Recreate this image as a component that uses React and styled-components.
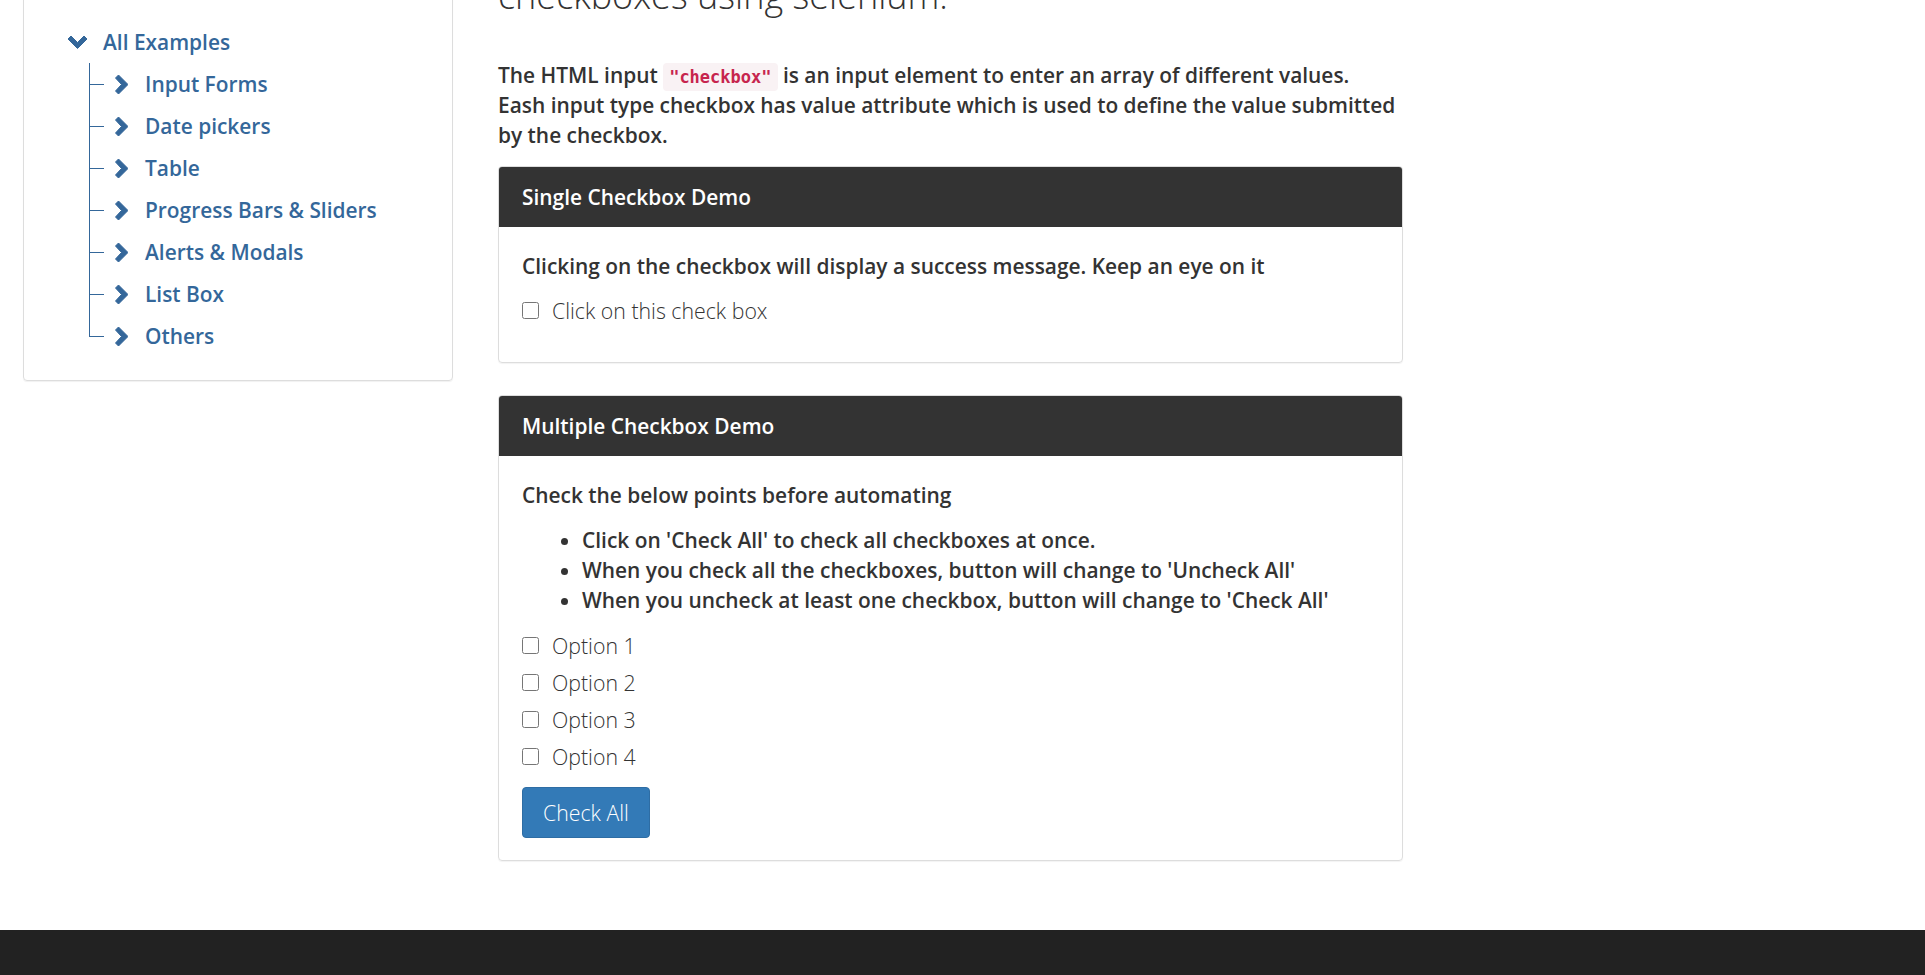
import React, { useState } from "react";
import styled, { createGlobalStyle } from "styled-components";

const GlobalStyle = createGlobalStyle`
  html {
    overflow-y: scroll;
  }
  body {
    margin: 0;
    background: #fff;
    color: #333;
    font-family: "Open Sans", "Liberation Sans", sans-serif;
  }
  * {
    box-sizing: border-box;
  }
`;

const BLUE = "#34679a";

const Page = styled.div`
  height: 975px;
  display: flex;
  flex-direction: column;
  overflow: hidden;
`;

const Main = styled.div`
  flex: 1;
  display: flex;
  align-items: flex-start;
  padding-left: 23px;
`;

const Sidebar = styled.aside`
  width: 430px;
  margin-top: -20px;
  padding: 40px 0 23px 44px;
  border: 1px solid #ddd;
  border-radius: 4px;
  box-shadow: 0 1px 1px rgba(0, 0, 0, 0.06);
  color: ${BLUE};
  font-weight: 600;
  font-size: 20.9px;
`;

const RootRow = styled.div`
  height: 42px;
  display: flex;
  align-items: center;
  gap: 16px;
`;

const Tree = styled.ul`
  list-style: none;
  margin: 0 0 0 21px;
  padding: 0;
`;

const TreeItem = styled.li`
  position: relative;
  height: 42px;
  display: flex;
  align-items: center;
  gap: 17px;
  padding-left: 26px;

  &::before {
    content: "";
    position: absolute;
    left: 0;
    top: 0;
    width: 1px;
    height: ${(p) => (p.$last ? "50%" : "100%")};
    background: ${BLUE};
  }
  &::after {
    content: "";
    position: absolute;
    left: 0;
    top: 50%;
    width: 15px;
    height: 1px;
    background: ${BLUE};
  }
`;

const Content = styled.section`
  width: 905px;
  margin-left: 45px;
  margin-top: -26px;
`;

const Title = styled.h1`
  margin: 0 0 42px;
  font-weight: 300;
  font-size: 36px;
  line-height: 44px;
  color: #333;
`;

const Intro = styled.p`
  margin: 0 0 16px;
  font-weight: 600;
  font-size: 20.9px;
  line-height: 30px;
`;

const Code = styled.code`
  font-family: "DejaVu Sans Mono", "Liberation Mono", monospace;
  font-weight: 700;
  font-size: 17px;
  line-height: 1;
  padding: 4px 6px;
  color: #c7254e;
  background: #f9f2f4;
  border-radius: 4px;
`;

const Card = styled.div`
  border: 1px solid #ddd;
  border-radius: 4px;
  margin-bottom: 32px;
  box-shadow: 0 1px 1px rgba(0, 0, 0, 0.05);
`;

const CardHead = styled.div`
  background: #333;
  color: #fff;
  padding: 18px 23px;
  border-radius: 3px 3px 0 0;
  font-weight: 600;
  font-size: 20.9px;
  line-height: 24px;
`;

const CardBody = styled.div`
  padding: 24px 23px 22px;
  display: flex;
  flex-direction: column;
  align-items: flex-start;
`;

const Text = styled.div`
  font-weight: 600;
  font-size: 20.9px;
  line-height: 30px;
`;

const Points = styled.ul`
  margin: 15px 0 0;
  padding-left: 60px;
  font-weight: 600;
  font-size: 20.9px;
  line-height: 30px;
`;

const Checks = styled.div`
  margin: ${(p) => p.$gap}px 0;
  display: flex;
  flex-direction: column;
`;

const CheckRow = styled.label`
  height: 37px;
  display: flex;
  align-items: center;
  gap: 13px;
  font-weight: 300;
  font-size: 21.3px;
  color: #333;

  input {
    width: 17px;
    height: 17px;
    margin: 0;
  }
`;

const Button = styled.button`
  background: #337ab7;
  border: 1px solid #2e6da4;
  border-radius: 4px;
  color: #fff;
  padding: 11px 20px;
  font-family: inherit;
  font-weight: 300;
  font-size: 21.3px;
  line-height: 27px;
  cursor: pointer;
`;

const Footer = styled.footer`
  height: 45px;
  flex-shrink: 0;
  background: #222;
`;

const ChevronDown = () => (
  <svg width="19" height="13" viewBox="0 0 19 13">
    <polygon
      points="0,3 3,0 9.5,6.5 16,0 19,3 9.5,12.5"
      fill={BLUE}
      stroke={BLUE}
      strokeWidth="1"
      strokeLinejoin="round"
    />
  </svg>
);

const ChevronRight = () => (
  <svg width="13" height="19" viewBox="0 0 13 19">
    <polygon
      points="0.5,3 3.5,0 13,9.5 3.5,19 0.5,16 6.5,9.5"
      fill={BLUE}
      stroke={BLUE}
      strokeWidth="1"
      strokeLinejoin="round"
    />
  </svg>
);

const examples = [
  "Input Forms",
  "Date pickers",
  "Table",
  "Progress Bars & Sliders",
  "Alerts & Modals",
  "List Box",
  "Others",
];

const options = ["Option 1", "Option 2", "Option 3", "Option 4"];

export default function App() {
  const [single, setSingle] = useState(false);
  const [checked, setChecked] = useState([false, false, false, false]);
  const allChecked = checked.every(Boolean);

  const toggle = (i) => setChecked(checked.map((c, j) => (j === i ? !c : c)));

  return (
    <Page>
      <GlobalStyle />
      <Main>
        <Sidebar>
          <RootRow>
            <ChevronDown />
            <span>All Examples</span>
          </RootRow>
          <Tree>
            {examples.map((name, i) => (
              <TreeItem key={name} $last={i === examples.length - 1}>
                <ChevronRight />
                <span>{name}</span>
              </TreeItem>
            ))}
          </Tree>
        </Sidebar>

        <Content>
          <Title>checkboxes using selenium.</Title>
          <Intro>
            The HTML input <Code>"checkbox"</Code> is an input element to enter an array of different values.
            <br />
            Eash input type checkbox has value attribute which is used to define the value submitted
            <br />
            by the checkbox.
          </Intro>

          <Card>
            <CardHead>Single Checkbox Demo</CardHead>
            <CardBody>
              <Text>Clicking on the checkbox will display a success message. Keep an eye on it</Text>
              <Checks $gap={11}>
                <CheckRow>
                  <input type="checkbox" checked={single} onChange={() => setSingle(!single)} />
                  Click on this check box
                </CheckRow>
              </Checks>
            </CardBody>
          </Card>

          <Card>
            <CardHead>Multiple Checkbox Demo</CardHead>
            <CardBody>
              <Text>Check the below points before automating</Text>
              <Points>
                <li>Click on 'Check All' to check all checkboxes at once.</li>
                <li>When you check all the checkboxes, button will change to 'Uncheck All'</li>
                <li>When you uncheck at least one checkbox, button will change to 'Check All'</li>
              </Points>
              <Checks $gap={12}>
                {options.map((o, i) => (
                  <CheckRow key={o}>
                    <input type="checkbox" checked={checked[i]} onChange={() => toggle(i)} />
                    {o}
                  </CheckRow>
                ))}
              </Checks>
              <Button onClick={() => setChecked(options.map(() => !allChecked))}>
                {allChecked ? "Uncheck All" : "Check All"}
              </Button>
            </CardBody>
          </Card>
        </Content>
      </Main>
      <Footer />
    </Page>
  );
}
